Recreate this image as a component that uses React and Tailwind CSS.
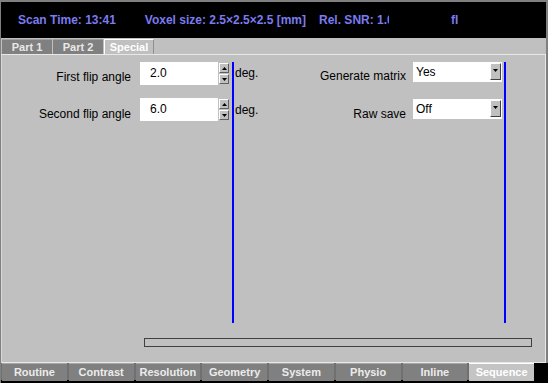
import React from 'react'

// Scanner protocol editor: "Special" card of the Sequence tab

const topTabs = [
  { name: 'Part 1', active: false },
  { name: 'Part 2', active: false },
  { name: 'Special', active: true },
]

const bottomTabs = ['Routine', 'Contrast', 'Resolution', 'Geometry', 'System', 'Physio', 'Inline', 'Sequence']

function Spinner() {
  return (
    <div className="ml-[1px] flex w-[10px] flex-col gap-[1px] pt-[1px]">
      {['up', 'down'].map(dir => (
        <div
          key={dir}
          className="flex h-[10px] items-center justify-center border-t border-l border-t-white border-l-white border-b border-r border-b-[#606060] border-r-[#606060] bg-[#c0c0c0]"
        >
          <svg width="5" height="3" viewBox="0 0 5 3">
            {dir === 'up' ? <path d="M2.5 0 L5 3 L0 3 Z" fill="#000" /> : <path d="M0 0 L5 0 L2.5 3 Z" fill="#000" />}
          </svg>
        </div>
      ))}
    </div>
  )
}

function NumberField({ label, value, labelClass }) {
  return (
    <div className="flex h-[23px] items-start justify-end pr-[3px]">
      <span className={`text-[12px] text-black ${labelClass}`}>{label}</span>
      <div className="ml-[9px] h-[23px] w-[78px] bg-white pl-[10px] pt-[2px] text-[12px] text-black">{value}</div>
      <Spinner />
    </div>
  )
}

function SelectField({ label, value, labelClass }) {
  return (
    <div className="flex h-[20px] items-start justify-end">
      <span className={`text-[12px] text-black ${labelClass}`}>{label}</span>
      <div className="ml-[7px] flex h-[20px] w-[89px] items-start bg-white">
        <span className="flex-1 pl-[3px] pt-[1px] text-[12px] text-black">{value}</span>
        <div className="mt-[1px] mr-[1px] flex h-[17px] w-[11px] items-center justify-center border-t border-l border-t-white border-l-white border-b border-r border-b-[#404040] border-r-[#404040] bg-[#c0c0c0]">
          <svg width="5" height="5" viewBox="0 0 5 5">
            <path d="M0 0 L5 0 L2.5 3 Z" fill="#000" />
          </svg>
        </div>
      </div>
    </div>
  )
}

export default function App() {
  return (
    <div className="h-[383px] w-[548px] overflow-hidden bg-[#808080] pt-[2px] pl-[1px] font-['Liberation_Sans',Arial,sans-serif]">
      {/* status header */}
      <div className="flex h-[36px] w-[545px] items-center bg-black text-[12px] font-bold text-[#7b7bf0]">
        <span className="ml-[17px]">Scan Time: 13:41</span>
        <span className="ml-[29px]">Voxel size: 2.5×2.5×2.5 [mm]</span>
        <span className="ml-[13px] w-[70px] overflow-hidden whitespace-nowrap">Rel. SNR: 1.0</span>
        <span className="ml-[62px]">fl</span>
      </div>

      {/* card tabs */}
      <div className="flex h-[16px] w-[545px] items-end gap-[1px] bg-[#c0c0c0] pl-[1px]">
        {topTabs.map(tab => (
          <div
            key={tab.name}
            className={`flex h-[15px] w-[50px] items-center justify-center text-[11px] font-bold ${
              tab.active
                ? 'border-t border-l border-r border-t-white border-l-white border-r-[#909090] bg-[#c0c0c0] text-white'
                : 'border-t border-t-[#a0a0a0] bg-[#808080] text-[#e8e8e8]'
            }`}
          >
            {tab.name}
          </div>
        ))}
      </div>

      {/* parameter card */}
      <div className="flex h-[309px] w-[545px] flex-col border-t border-t-[#e8e8e8] border-l border-l-[#d8d8d8] border-r border-r-[#e8e8e8] border-b border-b-[#e8e8e8] bg-[#c0c0c0]">
        <div className="flex pt-[7px]">
          <div className="flex w-[230px] flex-col gap-[13px]">
            <NumberField label="First flip angle" value="2.0" labelClass="mt-[6px]" />
            <NumberField label="Second flip angle" value="6.0" labelClass="mt-[7px]" />
          </div>
          <div className="h-[261px] w-[2px] bg-[#0000ff]" />
          <div className="flex w-[268px] flex-col gap-[17px]">
            <div className="flex h-[20px] items-start">
              <span className="pt-[2px] pl-[1px] text-[12px] text-black">deg.</span>
              <div className="flex-1">
                <SelectField label="Generate matrix" value="Yes" labelClass="mt-[5px]" />
              </div>
            </div>
            <div className="flex h-[20px] items-start">
              <span className="pt-[2px] pl-[1px] text-[12px] text-black">deg.</span>
              <div className="flex-1">
                <SelectField label="Raw save" value="Off" labelClass="mt-[6px]" />
              </div>
            </div>
          </div>
          <div className="ml-[2px] h-[261px] w-[2px] bg-[#0000ff]" />
        </div>
        <div className="ml-[142px] mt-[15px] h-[9px] w-[388px] border border-[#404040] bg-[#c0c0c0]" />
      </div>

      {/* sequence card tabs */}
      <div className="flex h-[20px] w-[547px] bg-black">
        <div className="flex w-[533px] flex-col">
          <div className="grid h-[17px] grid-cols-8 gap-[2px] bg-[#707070] pl-[1px]">
            {bottomTabs.map(name => (
              <div
                key={name}
                className={`flex items-center justify-center text-[11px] font-bold ${
                  name === 'Sequence'
                    ? 'border-t border-t-white bg-[#c4c4c4] text-white'
                    : 'border-t border-t-[#a8a8a8] bg-[#808080] text-[#ececec]'
                }`}
              >
                {name}
              </div>
            ))}
          </div>
        </div>
      </div>
    </div>
  )
}
